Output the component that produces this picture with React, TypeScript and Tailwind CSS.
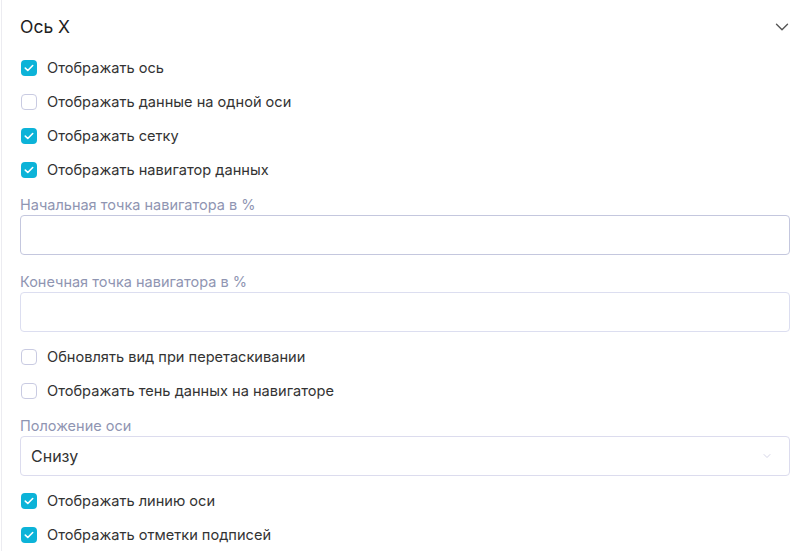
import { ChevronDown } from "lucide-react";

type CheckRowProps = {
  label: string;
  checked?: boolean;
};

function CheckRow({ label, checked }: CheckRowProps) {
  return (
    <label className="flex h-[34px] items-center gap-[10px] pl-[1px]">
      {checked ? (
        <span className="mt-[2px] flex h-4 w-4 items-center justify-center rounded-[4px] bg-[#0cb3d8]">
          <svg width="10" height="8" viewBox="0 0 10 8" fill="none">
            <path
              d="M1.3 4.1 3.8 6.5 8.7 1.5"
              stroke="white"
              strokeWidth="1.6"
              strokeLinecap="round"
              strokeLinejoin="round"
            />
          </svg>
        </span>
      ) : (
        <span className="mt-[2px] h-4 w-4 rounded-[4px] border border-[#c9cbe2] bg-white" />
      )}
      <span className="pt-[3px] text-[14.6px] text-[#333333]">{label}</span>
    </label>
  );
}

function FieldLabel({ text, className }: { text: string; className: string }) {
  return (
    <p className={`h-5 text-[14.5px] leading-[23px] text-[#8f95b2] ${className}`}>
      {text}
    </p>
  );
}

export default function App() {
  return (
    <div className="min-h-[554px] w-[809px] overflow-hidden bg-white font-['Inter',sans-serif]">
      <div className="ml-[1px] border-l border-[#ececf1] pr-[19px] pl-[18px]">
        <div className="flex h-[50px] items-start justify-between pt-[13px]">
          <h2 className="text-[17.5px] leading-7 text-[#222222]">Ось X</h2>
          <ChevronDown
            size={22}
            strokeWidth={1.5}
            className="mt-[3px] -mr-[3px] text-[#555555]"
          />
        </div>

        <CheckRow label="Отображать ось" checked />
        <CheckRow label="Отображать данные на одной оси" />
        <CheckRow label="Отображать сетку" checked />
        <CheckRow label="Отображать навигатор данных" checked />

        <FieldLabel text="Начальная точка навигатора в %" className="mt-[7px] mb-[2px]" />
        <input className="block h-10 w-full rounded-[4px] border border-[#c4c7de] bg-white px-[10px] outline-none" />

        <FieldLabel text="Конечная точка навигатора в %" className="mt-[15px] mb-[2px]" />
        <input className="block h-10 w-full rounded-[4px] border border-[#dcdef0] bg-white px-[10px] outline-none" />

        <div className="mt-[7px]">
          <CheckRow label="Обновлять вид при перетаскивании" />
          <CheckRow label="Отображать тень данных на навигаторе" />
        </div>

        <FieldLabel text="Положение оси" className="mt-[7px] mb-[2px]" />
        <div className="flex h-10 w-full items-center justify-between rounded-[4px] border border-[#dcdcee] bg-white pr-[16px] pl-[10px]">
          <span className="text-[16px] text-[#333333]">Снизу</span>
          <ChevronDown size={12} strokeWidth={1.5} className="text-[#c5c5de]" />
        </div>

        <div className="mt-[7px]">
          <CheckRow label="Отображать линию оси" checked />
          <CheckRow label="Отображать отметки подписей" checked />
        </div>
      </div>
    </div>
  );
}
